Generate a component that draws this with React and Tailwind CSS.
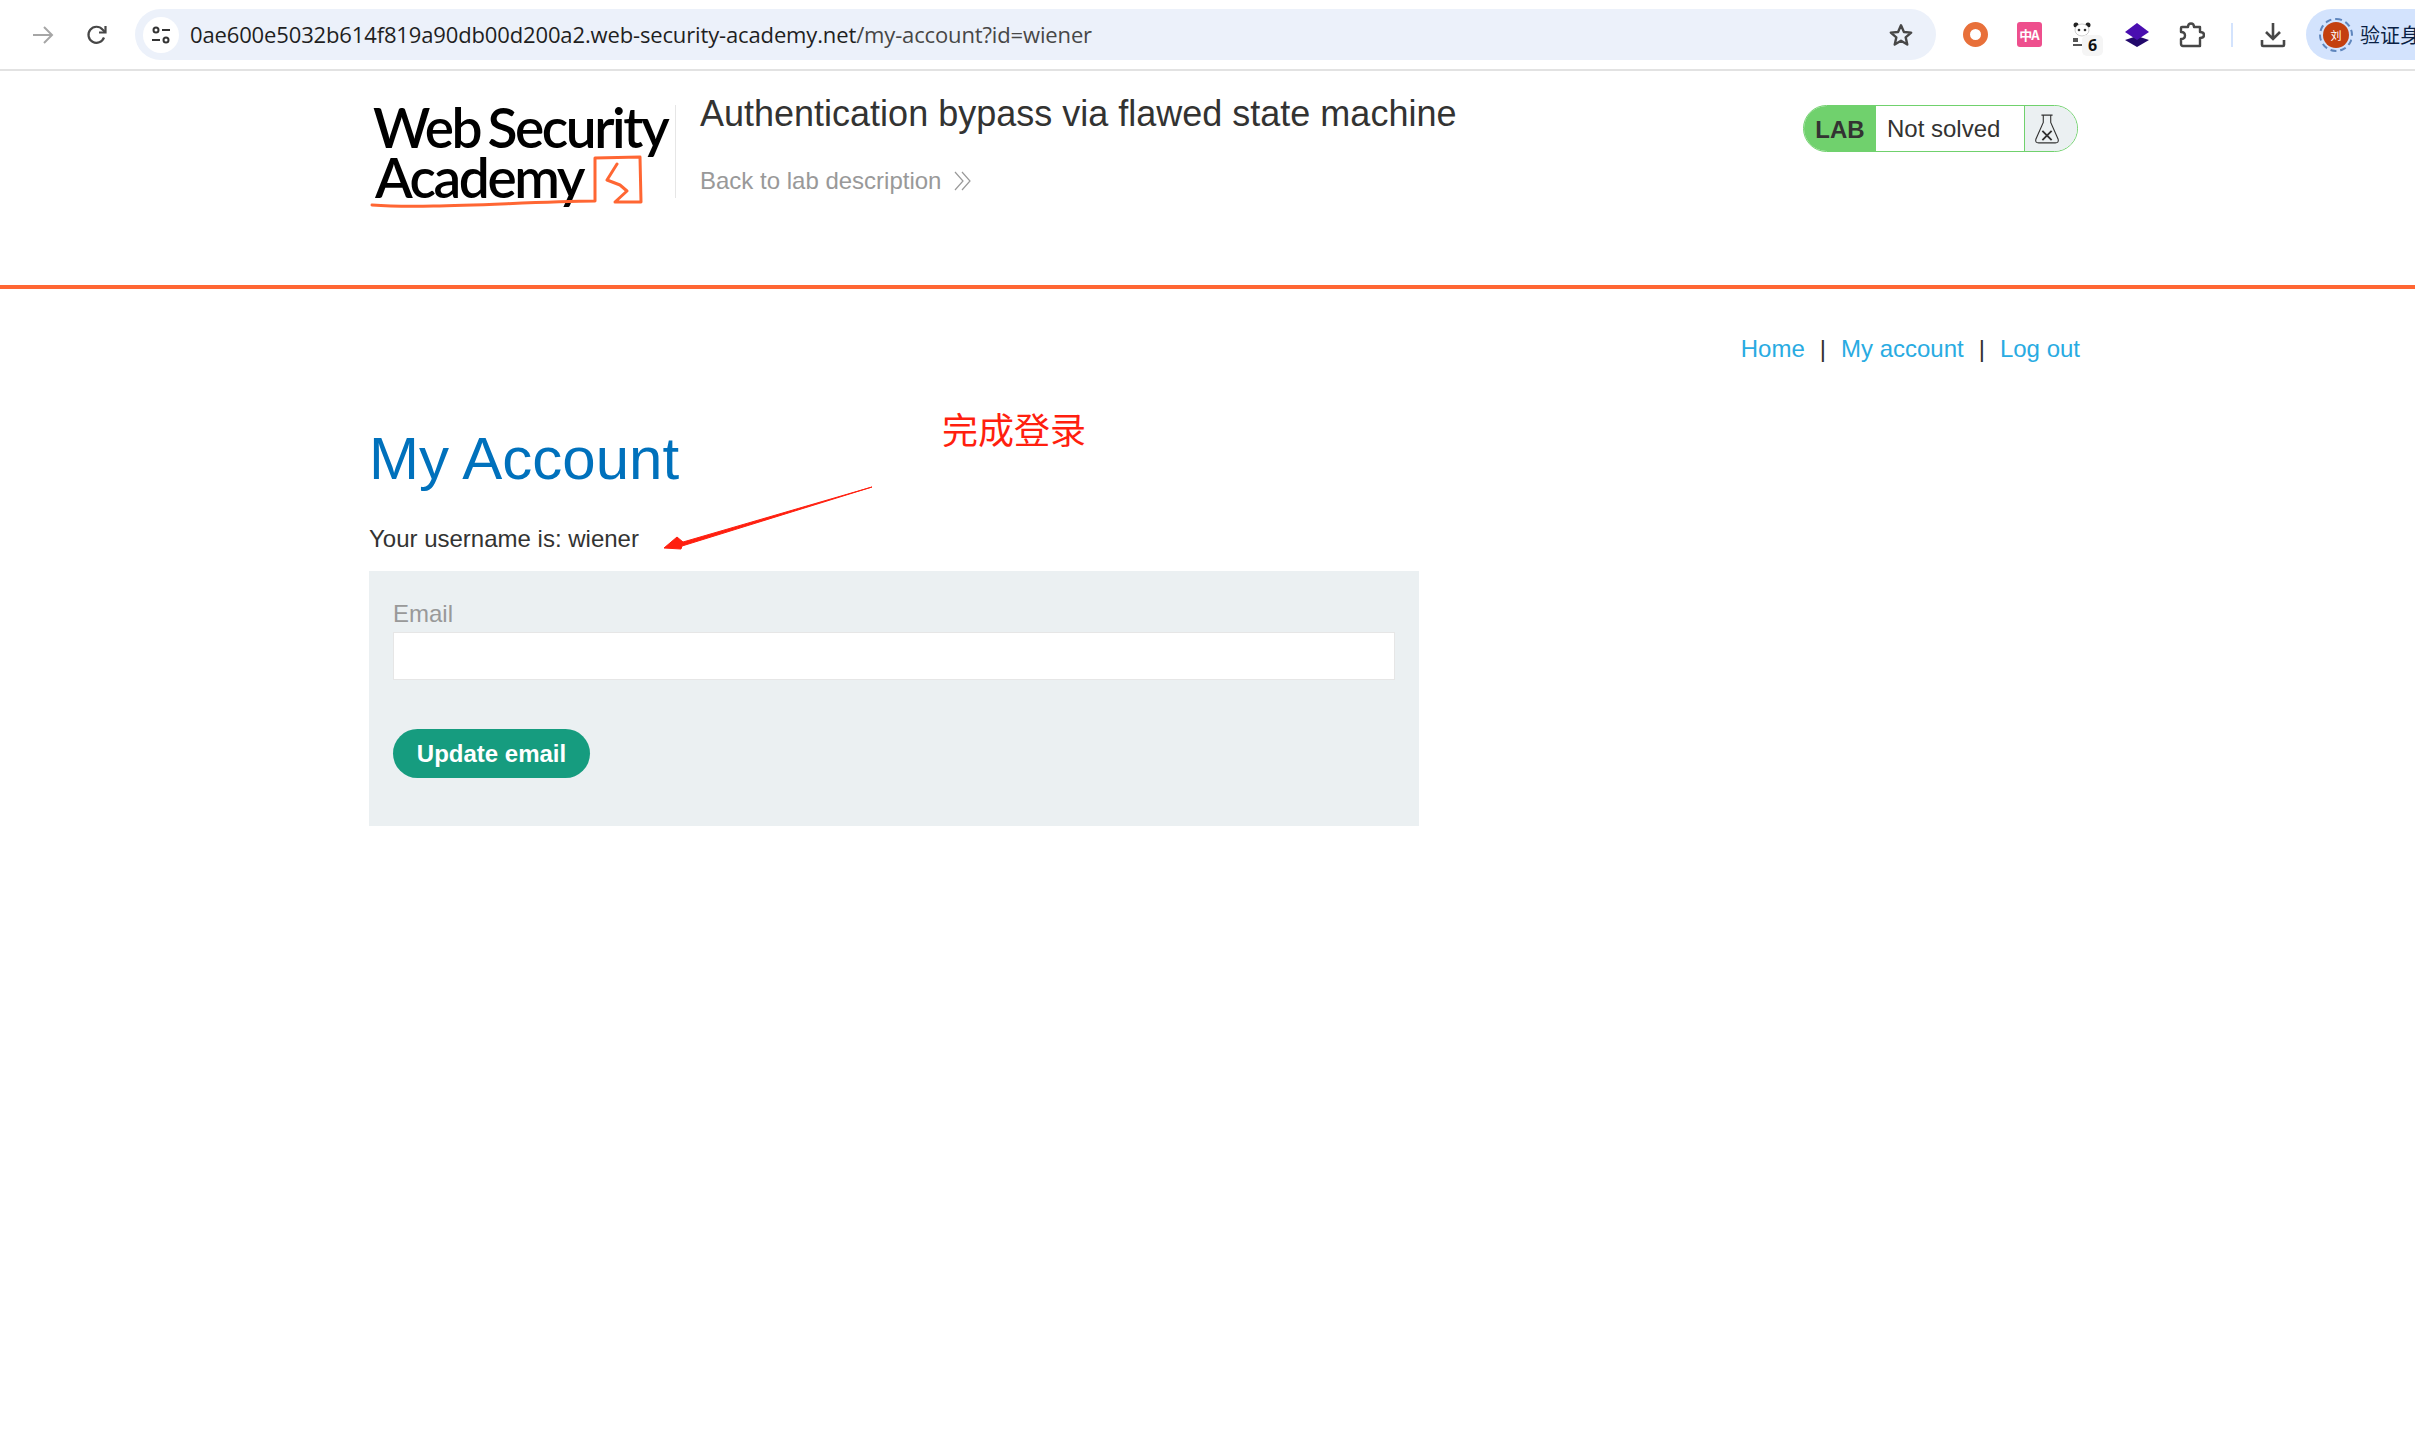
const ToolbarSlot = ({ children }) => (
  <div className="w-[54px] h-[51px] flex items-center justify-center shrink-0">
    {children}
  </div>
);

const LogoMark = () => (
  <svg
    className="absolute left-[-2px] top-[47px]"
    width="300"
    height="64"
    viewBox="0 0 300 64"
    fill="none"
  >
    <path
      d="M5 53 C60 57 150 50 228 49 L228 6 L273 5 L274 50 L248 50 L260 39 L253 33 L240 28 L250 12"
      stroke="#ff6633"
      strokeWidth="3"
      strokeLinejoin="round"
      strokeLinecap="round"
    />
  </svg>
);

const Flask = () => (
  <svg width="26" height="32" viewBox="0 0 28 34" fill="none" stroke="#333" strokeWidth="1.2">
    <path d="M8 2 H20 M10 2 V10 L2 28 Q1 32 5 32 H23 Q27 32 26 28 L18 10 V2" />
    <path d="M9 19 L19 29 M19 19 L9 29" strokeWidth="2" />
  </svg>
);

export default function App() {
  return (
    <div className="relative w-[2415px] h-[1449px] overflow-hidden bg-white font-['Liberation_Sans',Arial,sans-serif]">
      {/* browser toolbar */}
      <div className="h-[71px] border-b-2 border-[#e2e2e2] flex pt-[9px] pl-[16px] overflow-hidden">
        <ToolbarSlot>
          <svg width="24" height="24" viewBox="0 0 24 24" fill="none" stroke="#a6a6a6" strokeWidth="2">
            <path d="M2 12 H21 M13 4 L21 12 L13 20" />
          </svg>
        </ToolbarSlot>
        <ToolbarSlot>
          <svg width="24" height="24" viewBox="0 0 24 24" fill="none" stroke="#474747" strokeWidth="2.2">
            <path d="M19 14.5 A8 8 0 1 1 17.5 6.5 L20 9" />
            <path d="M20.5 3 V9.5 H14" />
          </svg>
        </ToolbarSlot>
        <div className="ml-[11px] w-[1801px] h-[51px] shrink-0 rounded-full bg-[#ecf1fa] flex items-center pl-[8px] pr-[22px]">
          <div className="w-[36px] h-[36px] rounded-full bg-white flex items-center justify-center shrink-0">
            <svg width="22" height="22" viewBox="0 0 22 22" fill="none" stroke="#333" strokeWidth="2">
              <circle cx="6" cy="6" r="2.5" />
              <path d="M12 6 H20 M2 16 H10" />
              <circle cx="16" cy="16" r="2.5" />
            </svg>
          </div>
          <div className="ml-[11px] text-[22px] tracking-[-0.14px] text-[#1f1f1f] font-['Open_Sans',sans-serif] whitespace-nowrap flex-1">
            0ae600e5032b614f819a90db00d200a2.web-security-academy.net
            <span className="text-[#474747]">/my-account?id=wiener</span>
          </div>
          <svg width="26" height="26" viewBox="0 0 24 24" fill="none" stroke="#474747" strokeWidth="2.2" strokeLinejoin="round">
            <path d="M12 3 L14.7 9.2 L21.4 9.8 L16.3 14.2 L17.8 20.8 L12 17.3 L6.2 20.8 L7.7 14.2 L2.6 9.8 L9.3 9.2 Z" />
          </svg>
        </div>
        <div className="ml-[12px] flex shrink-0">
          <ToolbarSlot>
            <div className="w-[25px] h-[25px] rounded-full border-[7px] border-[#e8703a]" />
          </ToolbarSlot>
          <ToolbarSlot>
            <div className="w-[25px] h-[25px] rounded-[3px] bg-[#ee4f8d] text-white text-[13px] font-bold leading-[25px] text-center whitespace-nowrap tracking-[-1px] font-['Noto_Sans_CJK_SC',sans-serif]">
              中A
            </div>
          </ToolbarSlot>
          <ToolbarSlot>
            <div className="relative w-[26px] h-[26px] ml-[6px]">
              <svg width="18" height="24" viewBox="0 0 18 24">
                <circle cx="3" cy="3" r="2.5" fill="#222" />
                <circle cx="15" cy="3" r="2.5" fill="#222" />
                <ellipse cx="9" cy="8" rx="7" ry="6" fill="#fff" stroke="#aaa" strokeWidth="0.6" />
                <circle cx="6" cy="8" r="1.3" fill="#333" />
                <circle cx="12" cy="8" r="1.3" fill="#333" />
                <path d="M0 16 H5 V20 H0 Z M0 22 H9 V24 H0 Z" fill="#555" />
              </svg>
              <div className="absolute left-[9px] top-[13px] w-[21px] h-[21px] rounded-[5px] bg-[#f5f5f5] text-[16px] font-bold leading-[21px] text-center text-[#111] font-['Open_Sans',sans-serif]">
                6
              </div>
            </div>
          </ToolbarSlot>
          <ToolbarSlot>
            <svg width="26" height="26" viewBox="0 0 26 26">
              <path d="M13 14 L1 18 L13 25 L25 18 Z" fill="#22086b" />
              <path d="M13 1 L1 10 L13 18 L25 10 Z" fill="#4a0eb0" />
            </svg>
          </ToolbarSlot>
          <ToolbarSlot>
            <svg className="ml-[2px]" width="26" height="26" viewBox="0 0 26 26" fill="none" stroke="#474747" strokeWidth="2.4" strokeLinejoin="round">
              <path d="M3 5 H9 Q9 1.5 12 1.5 Q15 1.5 15 5 H21 V10 Q25 10 25 13 Q25 16 21 16 V24 H4 Q2 24 2 22 V17 Q6 17 6 13.5 Q6 10 2 10 V6 Q2 5 3 5 Z" />
            </svg>
          </ToolbarSlot>
        </div>
        <div className="ml-[13px] mt-[14px] w-[2px] h-[24px] bg-[#d3e3fd] shrink-0" />
        <div className="shrink-0 ml-[13px] mr-[6px]">
          <ToolbarSlot>
            <svg width="26" height="26" viewBox="0 0 26 26" fill="none" stroke="#474747" strokeWidth="2.6">
              <path d="M13 1 V16 M6 10 L13 17 L20 10" />
              <path d="M2 18 V23 Q2 24 3 24 H23 Q24 24 24 23 V18" />
            </svg>
          </ToolbarSlot>
        </div>
        <div className="w-[200px] h-[51px] shrink-0 rounded-l-full bg-[#d3e3fd] flex items-center pl-[15px]">
          <div className="relative w-[26px] h-[26px] ml-[2px] rounded-full bg-[#c4400f] text-white text-[11px] leading-[26px] text-center font-['Noto_Sans_CJK_SC',sans-serif] outline-2 outline-offset-[2px] outline-dashed outline-[#5f86bd]">
            刘
          </div>
          <span className="ml-[11px] text-[20px] text-[#0a1f44] font-['Noto_Sans_CJK_SC',sans-serif] whitespace-nowrap">
            验证身份
          </span>
        </div>
      </div>

      {/* lab header */}
      <div className="h-[218px] border-b-[4px] border-[#ff6633] pl-[369px] flex">
        <div className="relative w-[307px] h-[93px] mt-[34px] border-r border-[#e6e6e6] self-start font-['Lato',sans-serif] font-semibold text-black text-[55px] leading-[50px] tracking-[-2.4px] [word-spacing:-4px]">
          <div className="pl-[4px] -mt-[3px] whitespace-nowrap">Web Security</div>
          <div className="pl-[6px] whitespace-nowrap">Academy</div>
          <LogoMark />
        </div>
        <div className="ml-[24px] pt-[20px] w-[1103px] shrink-0">
          <h2 className="text-[36px] leading-[46px] text-[#333332]">
            Authentication bypass via flawed state machine
          </h2>
          <div className="mt-[29px] flex items-center text-[24px] leading-[30px] text-[#999]">
            Back to lab description
            <svg className="ml-[12px]" width="20" height="20" viewBox="0 0 20 20" fill="none" stroke="#999" strokeWidth="1.2">
              <path d="M2 1 L10 10 L2 19 M9 1 L17 10 L9 19" />
            </svg>
          </div>
        </div>
        <div className="mt-[34px] w-[275px] h-[47px] rounded-full border border-[#70d16d] overflow-hidden flex self-start shrink-0 text-[24px] leading-[47px]">
          <div className="w-[72px] bg-[#70d16d] font-bold text-[#333332] flex items-center justify-center pt-[1px]">LAB</div>
          <div className="w-[149px] border-r border-[#70d16d] pl-[11px] flex items-center text-[#333332]">Not solved</div>
          <div className="flex-1 bg-[#ebf0f2] flex items-center justify-center pr-[8px]">
            <Flask />
          </div>
        </div>
      </div>

      {/* page content */}
      <div className="pl-[369px] w-[2080px]">
        <div className="mt-[45px] flex justify-end items-center text-[24px] leading-[30px] text-[#29abe2]">
          <a>Home</a>
          <span className="mx-[15px] text-[#333332]">|</span>
          <a>My account</a>
          <span className="mx-[15px] text-[#333332]">|</span>
          <a>Log out</a>
        </div>
        <h1 className="mt-[58px] text-[60px] leading-[74px] text-[#0071bc]">My Account</h1>
        <p className="mt-[28px] text-[24px] leading-[30px] text-[#333332]">Your username is: wiener</p>
        <div className="mt-[17px] w-[1050px] h-[255px] bg-[#ebf0f2] px-[24px] pt-[28px]">
          <label className="block text-[24px] leading-[30px] text-[#999]">Email</label>
          <input className="block mt-[3px] w-[1002px] h-[48px] bg-white border border-[#e6e6e6]" />
          <button className="mt-[49px] h-[49px] w-[197px] rounded-full bg-[#169c7f] text-white font-bold text-[24px]">
            Update email
          </button>
        </div>
      </div>

      {/* annotation */}
      <div className="absolute left-[942px] top-[404px] text-[36px] leading-[48px] text-[#ff1f0f] font-['Noto_Sans_CJK_SC',sans-serif]">
        完成登录
      </div>
      <svg className="absolute left-[660px] top-[480px]" width="220" height="72" viewBox="0 0 220 72" fill="none">
        <path d="M212 7 L23 62 L17 57 L4 68 L21 69 L22 66 Z" fill="#ff1f0f" stroke="#ff1f0f" strokeWidth="1" strokeLinejoin="round" />
      </svg>
    </div>
  );
}
